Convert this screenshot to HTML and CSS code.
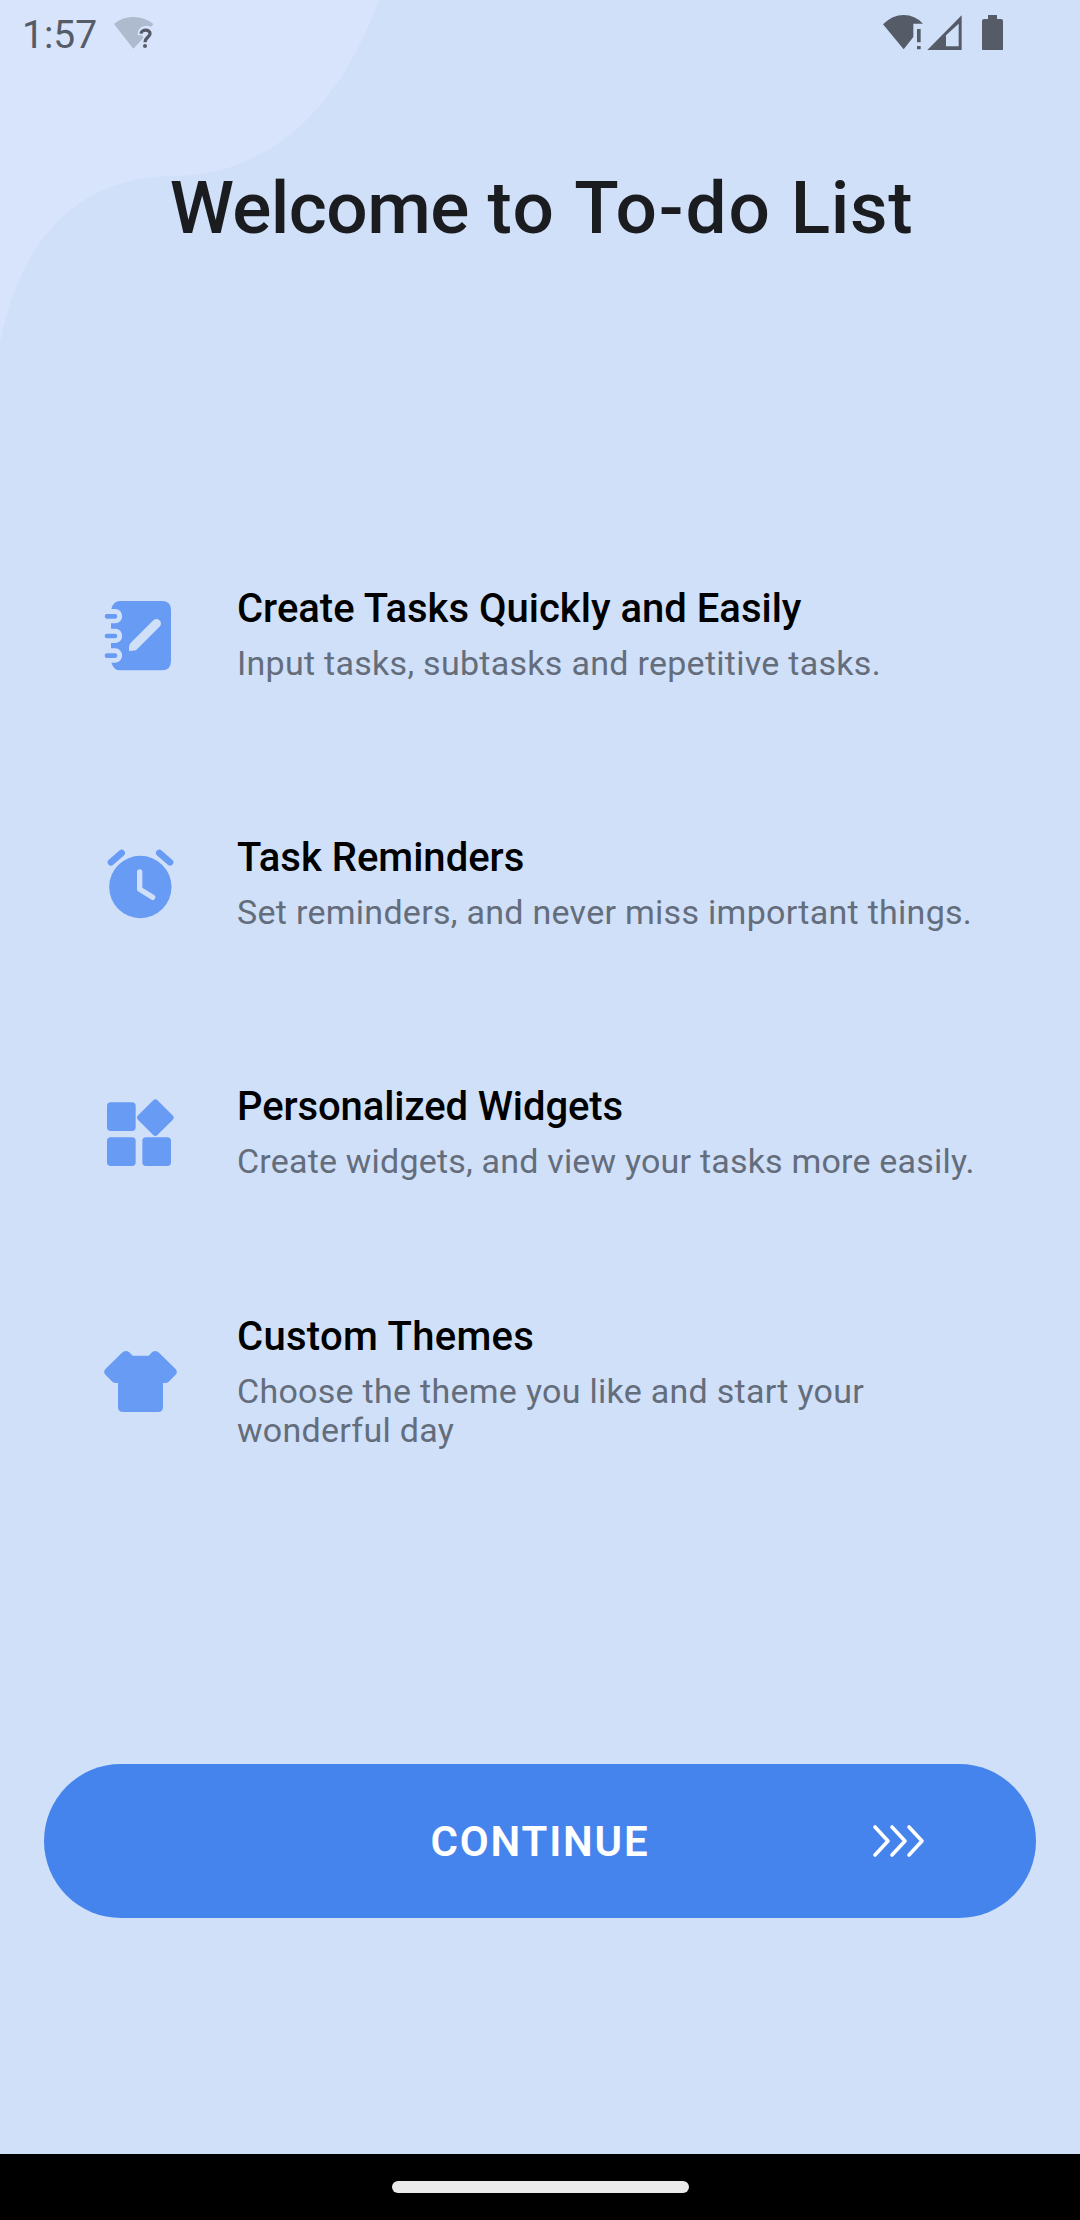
FILE: index.html
```html
<!DOCTYPE html>
<html lang="en">
<head>
<meta charset="utf-8">
<title>Welcome to To-do List</title>
<link rel="stylesheet" href="styles.css">
</head>
<body>
<div class="screen">
  <svg class="blob" width="380" height="345" viewBox="0 0 380 345"><path d="M0 0H379C341 103 275 175 173 176C80 177 22 235 0 343Z"/></svg>
  <header class="status">
    <span class="clock">1:57</span>
    <svg class="wifi-unknown" width="44" height="36" viewBox="0 0 132 108">
      <path class="faint" d="M6 33Q30 12 64 12T124 33L118 41Q101 34 87 43Q77 51 77 67H91L94 75L64 107Z"/>
      <path class="mark" d="M87 62C88 48 115 48 114 62C113 73 99 74 99 88"/><circle class="solid" cx="99" cy="99" r="6"/>
    </svg>
    <svg class="signals" width="124" height="40" viewBox="0 0 372 120">
      <g class="solid">
        <path d="M9 43Q37 15 71 15T129 41H100V81L71 118Z"/>
        <path d="M111 57h11v40h-11zM111 108h11v10h-11z"/>
        <path fill-rule="evenodd" d="M142 120L245 16V120ZM198 76V109H236V41Z"/>
        <path d="M324 15h27v12h12q6 0 6 6v83q0 6-6 6h-51q-6 0-6-6V33q0-6 6-6h12z"/>
      </g>
    </svg>
  </header>
  <h1 class="title"><span class="w-tight">Welcome</span> <span class="w-mid">to</span> <span class="w-wide">To-do</span> List</h1>
  <main class="features">
    <section class="feature">
      <svg class="icon" viewBox="0 0 300 333">
        <path d="M90 63H216Q243 63 243 90V243Q243 271 216 271H90Q72 271 64 248H76A20 21 0 0 0 76 205H63V189H76A20 21 0 0 0 76 146H63V130H76A20 21 0 0 0 76 87H64Q70 63 90 63Z"/>
        <path class="rings" d="M51 109H75M51 168H75M51 227H75"/>
        <path class="cut" d="M190 121Q199 113 208 120Q217 129 210 139L141 208Q138 213 117 213Q116 196 121 190Z"/>
      </svg>
      <div class="copy"><h2 class="name">Create Tasks Quickly and Easily</h2><p class="desc">Input tasks, subtasks and repetitive tasks.</p></div>
    </section>
    <section class="feature">
      <svg class="icon" viewBox="0 -3 300 333">
        <circle cx="151" cy="171" r="93.5"/>
        <path class="bells" d="M63 97L95 69M208 69L240 97"/>
        <path class="hands" d="M149 126V178L188 202"/>
      </svg>
      <div class="copy"><h2 class="name">Task Reminders</h2><p class="desc">Set reminders, and never miss important things.</p></div>
    </section>
    <section class="feature">
      <svg class="icon" viewBox="0 -6 300 333">
        <rect x="51" y="67" width="86" height="86" rx="11"/>
        <rect x="51" y="172" width="86" height="86" rx="11"/>
        <rect x="157" y="172" width="86" height="86" rx="11"/>
        <rect x="154.500" y="71.500" width="83" height="83" rx="10" transform="rotate(45 196 113)"/>
      </svg>
      <div class="copy"><h2 class="name name-tight">Personalized Widgets</h2><p class="desc desc-tight">Create widgets, and view your tasks more easily.</p></div>
    </section>
    <section class="feature">
      <svg class="icon" viewBox="0 -9 300 333">
        <path d="M96 68Q106 58 118 67L128 77H176L186 67Q197 58 207 68L256 116Q265 125 256 135L236 155Q232 159 226 159H219V231Q219 246 204 246H99Q84 246 84 231V159H77Q71 159 67 155L47 135Q38 126 47 116Z"/>
      </svg>
      <div class="copy"><h2 class="name name-wide">Custom Themes</h2><p class="desc">Choose the theme you like and start your wonderful day</p></div>
    </section>
  </main>
  <button class="continue" type="button">
    <span class="label">CONTINUE</span>
    <svg class="chevrons" width="54" height="34" viewBox="0 0 54 34"><path d="M3 3L16 17L3 31M20 3L33 17L20 31M37 3L50 17L37 31"/></svg>
  </button>
  <footer class="navbar"><div class="handle"></div></footer>
</div>
</body>
</html>
```
FILE: styles.css
```css
* { box-sizing: border-box; }
body { margin: 0; font-family: Roboto, sans-serif; background: #d0e0f9; }
h1, h2, p { margin: 0; }
.screen { position: relative; width: 1080px; height: 2220px; display: flex; flex-direction: column; isolation: isolate; }
.blob { position: absolute; left: 0; top: 0; z-index: -1; fill: #d8e3fc; }
.status { height: 68px; display: flex; align-items: flex-start; color: #555c67; padding-left: 22px; }
.clock { font-size: 39px; line-height: 46px; margin-top: 12px; width: 90px; }
.wifi-unknown { margin-top: 13px; }
.signals { margin: 10px 0 0 724px; }
.solid { fill: #555c67; }
.faint { fill: #aebbce; }
.mark { fill: none; stroke: #555c67; stroke-width: 10; }
.title { margin-top: 97px; height: 86px; line-height: 86px; text-align: center; font-size: 73px; font-weight: 500; letter-spacing: .65px; color: #1b1c20; padding-left: 3px; }
.w-tight { letter-spacing: -.6px; }
.w-mid { letter-spacing: 1.500px; }
.w-wide { letter-spacing: 1.900px; }
.features { margin-top: 260px; display: grid; grid-auto-rows: 249px; }
.feature { display: flex; align-items: center; padding-left: 90px; }
.icon { width: 100px; height: 111px; fill: #689bf4; flex: none; }
.rings, .bells, .hands { fill: none; stroke-linecap: round; stroke-linejoin: round; }
.rings { stroke: #689bf4; stroke-width: 14; }
.bells { stroke: #689bf4; stroke-width: 20; }
.hands { stroke: #d0e0f9; stroke-width: 16; }
.cut { fill: #d0e0f9; }
.copy { margin-left: 47px; width: 760px; padding-bottom: 2px; }
.name { font-size: 40px; line-height: 48px; font-weight: 500; color: #000; }
.name-tight { letter-spacing: -.1px; }
.name-wide { letter-spacing: .3px; }
.desc { margin-top: 11px; font-size: 34px; line-height: 39.500px; letter-spacing: .28px; color: #646d7b; }
.feature:last-child .desc { width: 660px; }
.desc-tight { letter-spacing: .2px; }
.continue { margin: 257px 44px 0; height: 154px; border: 0; border-radius: 77px; background: #4684ed; color: #fff; display: grid; grid-template-columns: 1fr auto 1fr; align-items: center; padding: 0; font: 600 42px Roboto, sans-serif; }
.label { grid-column: 2; letter-spacing: 1.800px; }
.chevrons { margin-left: 223px; fill: none; stroke: #fff; stroke-width: 3.600; stroke-linecap: round; stroke-linejoin: round; }
.navbar { margin-top: auto; height: 66px; background: #000; display: flex; align-items: center; justify-content: center; }
.handle { width: 297px; height: 12px; border-radius: 6px; background: #ebebeb; }
```
